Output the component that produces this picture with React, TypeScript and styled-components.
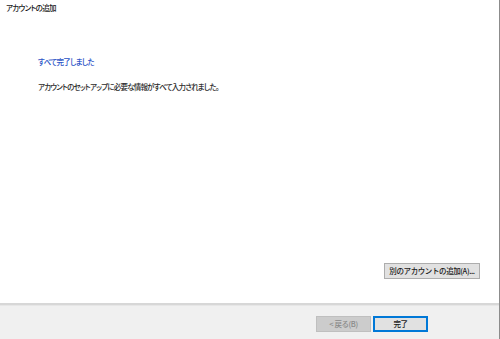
import React from 'react';
import styled, { createGlobalStyle } from 'styled-components';

const GlobalStyle = createGlobalStyle`
    html, body {
        margin: 0;
        padding: 0;
        background: #ffffff;
    }
    body {
        font-family: "Noto Sans CJK JP", "Noto Sans", sans-serif;
        font-feature-settings: "palt";
        font-weight: 500;
    }
`;

const Window = styled.div`
    width: 500px;
    height: 339px;
    box-sizing: border-box;
    border-right: 1px solid #8c8c8c;
    display: flex;
    flex-direction: column;
    background: #ffffff;
`;

const TitleBar = styled.div`
    height: 16px;
    padding: 3px 0 0 6px;
    box-sizing: border-box;
    font-size: 7.5px;
    letter-spacing: -0.7px;
    line-height: 10px;
    color: #1a1a1a;
`;

const Body = styled.div`
    flex: 1;
    display: flex;
    flex-direction: column;
    padding: 41px 19px 24px 38px;
`;

const Heading = styled.div`
    font-size: 7.5px;
    letter-spacing: -0.7px;
    line-height: 10px;
    color: #2a52c6;
`;

const Message = styled.div`
    margin-top: 15px;
    font-size: 7.5px;
    letter-spacing: -0.8px;
    line-height: 10px;
    color: #2b2b2b;
`;

const Spacer = styled.div`
    flex: 1;
`;

const BodyActions = styled.div`
    display: flex;
    justify-content: flex-end;
`;

const Button = styled.button<{ $primary?: boolean; $width: number }>`
    width: ${p => p.$width}px;
    height: 16px;
    padding: 0;
    box-sizing: border-box;
    font-family: inherit;
    font-weight: 500;
    font-size: 7.5px;
    letter-spacing: -0.4px;
    line-height: 10px;
    white-space: nowrap;
    color: ${p => (p.disabled ? '#8a8a8a' : '#1a1a1a')};
    background: ${p => (p.disabled ? '#cccccc' : '#e1e1e1')};
    border: 1px solid ${p => (p.$primary ? '#0078d7' : p.disabled ? '#bfbfbf' : '#adadad')};
    box-shadow: ${p => (p.$primary ? 'inset 0 0 0 1px #0078d7' : 'none')};
    border-radius: 0;
    cursor: default;
`;

const Divider = styled.div`
    height: 2px;
    background: #d7d7d7;
    border-bottom: 1px solid #e6e6e6;
`;

const Footer = styled.div`
    height: 33px;
    box-sizing: border-box;
    background: #f0f0f0;
    display: flex;
    justify-content: flex-end;
    align-items: flex-start;
    gap: 2px;
    padding: 10px 71px 0 0;
`;

const App: React.FC = () => {
    return (
        <>
            <GlobalStyle />
            <Window>
                <TitleBar>アカウントの追加</TitleBar>
                <Body>
                    <Heading>すべて完了しました</Heading>
                    <Message>アカウントのセットアップに必要な情報がすべて入力されました。</Message>
                    <Spacer />
                    <BodyActions>
                        <Button $width={96}>別のアカウントの追加(A)...</Button>
                    </BodyActions>
                </Body>
                <Divider />
                <Footer>
                    <Button $width={55} disabled>&lt; 戻る(B)</Button>
                    <Button $width={55} $primary>完了</Button>
                </Footer>
            </Window>
        </>
    );
};

export default App;
